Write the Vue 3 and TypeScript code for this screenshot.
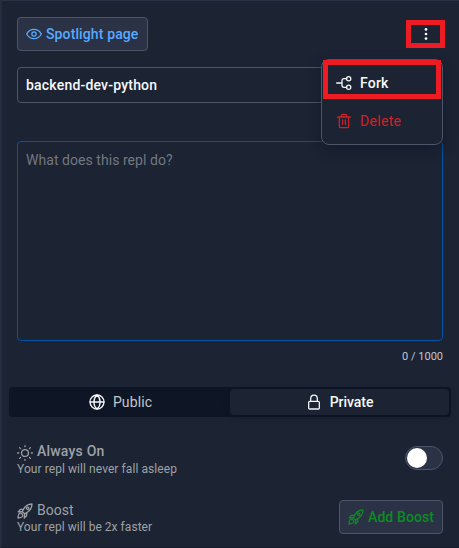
<script setup lang="ts">
import { ref } from 'vue'

const title = ref<string>('backend-dev-python')
const description = ref<string>('')
const limit = 1000
const visibility = ref<'public' | 'private'>('private')
const alwaysOn = ref<boolean>(false)
const rocket: string[] = [
  'M7 15.8 C5.8 14.8 4 15.2 3 16.4 C1.8 17.8 1.5 22.5 1.5 22.5 C1.5 22.5 6.2 22 7.6 20.8 C8.8 19.8 9 17.8 7.8 16.6',
  'M8 13 C10.5 6.5 14.5 1.5 22.5 1.5 C22.5 9.5 17.5 13.5 11.5 16.2 Z',
  'M9.5 9.5 H5 L1.8 13.2 L8 13 M14.5 14.8 V19 L10.8 22.5 L11.5 16.2',
]
</script>

<template>
  <main class="panel">
    <header class="top">
      <button class="button spotlight">
        <svg class="icon" viewBox="0 0 24 24"><path d="M1 12 C6 2.7 18 2.7 23 12 C18 21.3 6 21.3 1 12 Z" /><circle cx="12" cy="12" r="3.2" /></svg>
        <span>Spotlight page</span>
      </button>
      <div class="more-wrap">
        <button class="more" aria-label="More">
          <svg viewBox="0 0 16 16"><circle cx="8" cy="3.4" r="1.35" /><circle cx="8" cy="8" r="1.35" /><circle cx="8" cy="12.6" r="1.35" /></svg>
        </button>
        <div class="menu">
          <div class="item fork">
            <svg class="icon" viewBox="0 0 24 24"><path d="M1 12 H9 M16 5.5 H12 Q9 5.5 9 8.5 V15.5 Q9 18.5 12 18.5 H16" /><circle cx="19" cy="5.5" r="3.2" /><circle cx="19" cy="18.5" r="3.2" /></svg>
            <span>Fork</span>
          </div>
          <div class="item delete">
            <svg class="icon" viewBox="0 0 24 24"><path d="M2.5 6 H21.5 M5 6 V20 Q5 22 7 22 H17 Q19 22 19 20 V6 M8 6 V4 Q8 2 10 2 H14 Q16 2 16 4 V6 M10 10.5 V17 M14 10.5 V17" /></svg>
            <span>Delete</span>
          </div>
        </div>
      </div>
    </header>

    <input v-model="title" class="field name" />
    <textarea v-model="description" class="field description" placeholder="What does this repl do?"></textarea>
    <div class="count"><span>{{ description.length }} / {{ limit }}</span></div>

    <div class="segments">
      <button class="segment" :class="{ active: visibility === 'public' }" @click="visibility = 'public'">
        <svg class="icon" viewBox="0 0 24 24"><circle cx="12" cy="12" r="10.5" /><path d="M1.5 12 H22.5 M12 1.5 C5.7 7 5.7 17 12 22.5 C18.3 17 18.3 7 12 1.5" /></svg>
        <span class="public">Public</span>
      </button>
      <button class="segment" :class="{ active: visibility === 'private' }" @click="visibility = 'private'">
        <svg class="icon" viewBox="0 0 24 24"><rect x="4" y="11" width="16" height="11.5" rx="1.5" /><path d="M7 11 V7 C7 -0.3 17 -0.3 17 7 V11" /></svg>
        <span class="private">Private</span>
      </button>
    </div>

    <section class="row always">
      <div>
        <div class="heading strong">
          <svg class="icon" viewBox="0 0 24 24"><circle cx="12" cy="12" r="5.2" /><path d="M12 1 V2.5 M12 21.5 V23 M1 12 H2.5 M21.5 12 H23 M4 4 L5.2 5.2 M18.8 18.8 L20 20 M4 20 L5.2 18.8 M18.8 5.2 L20 4" /></svg>
          <span class="always-label">Always On</span>
        </div>
        <p><span class="sleep">Your repl will never fall asleep</span></p>
      </div>
      <button class="toggle" :class="{ on: alwaysOn }" aria-label="Always On" @click="alwaysOn = !alwaysOn"><i></i></button>
    </section>

    <section class="row boost">
      <div>
        <div class="heading">
          <svg class="icon" viewBox="0 0 24 24"><path v-for="d in rocket" :key="d" :d="d" /><circle cx="16" cy="8" r="1.8" /></svg>
          <span class="boost-label">Boost</span>
        </div>
        <p><span class="faster">Your repl will be 2x faster</span></p>
      </div>
      <button class="button add">
        <svg class="icon" viewBox="0 0 24 24"><path v-for="d in rocket" :key="d" :d="d" /><circle cx="16" cy="8" r="1.8" /></svg>
        <span>Add Boost</span>
      </button>
    </section>
  </main>
</template>

<style>
body { background: #1c2333; }
</style>

<style scoped>
* { box-sizing: border-box; }
.panel {
  height: 548px;
  padding: 16px 16px 0 15px;
  border-top: 1px solid #2b3245;
  border-left: 2px solid #252c40;
  border-bottom: 1px solid #151c2b;
  background: #1c2333;
  color: #f5f9fc;
  font: 14px/20px Roboto, "Liberation Sans", sans-serif;
  overflow: hidden;
}
button { margin: 0; padding: 0; font: inherit; color: inherit; background: none; border: 0; }
span { white-space: nowrap; }
.icon { width: 16px; height: 16px; flex: none; fill: none; stroke: currentColor; stroke-width: 1.9; stroke-linecap: round; stroke-linejoin: round; }
.top { display: flex; justify-content: space-between; height: 34px; }
.button { display: flex; align-items: center; gap: 4px; height: 34px; padding: 0 8px; background: #2b3245; border: 1px solid #4e5569; border-radius: 4px; font-weight: 500; }
.spotlight { width: 131px; color: #57abff; letter-spacing: .12px; }
.more-wrap { position: relative; }
.more { display: grid; place-items: center; width: 39px; height: 28px; margin: 3px -2px 0 0; border: 5px solid #ed1c24; }
.more svg { width: 16px; height: 16px; fill: #fff; }
.menu { position: absolute; z-index: 1; top: 42px; right: 0; width: 122px; height: 86px; background: #1c2333; border: 1px solid #4e5569; border-radius: 8px; box-shadow: 0 4px 12px #0e152599; }
.item { display: flex; align-items: center; gap: 8px; }
.fork { width: 118px; height: 39px; margin-left: 1px; padding: 6px 0 0 8px; border: 5px solid #ed1c24; font-weight: 500; letter-spacing: .2px; }
.delete { padding: 12px 0 0 14px; color: #d61f24; letter-spacing: .3px; }
.field { display: block; width: 426px; margin: 0; padding: 0 8px; border: 1px solid #4e5569; border-radius: 4px; outline: 0; background: #1c2333; color: #f5f9fc; font: 14px/20px Roboto, sans-serif; resize: none; }
.name { height: 36px; margin-top: 16px; font-weight: 500; letter-spacing: .2px; }
.description { height: 200px; margin-top: 38px; padding-top: 8px; border-color: #0053a6; letter-spacing: .05px; }
.description::placeholder { color: #737780; opacity: 1; }
.count { margin-top: 8px; height: 16px; text-align: right; font-size: 11px; line-height: 16px; color: #c2c8cc; }
.segments { display: flex; width: 442px; height: 30px; margin: 22px 0 0 -8px; padding: 2px; border-radius: 4px; background: #0e1525; }
.segment { display: flex; flex: 1; align-items: center; justify-content: center; gap: 8px; color: #c2c8cc; border-radius: 4px; }
.segment .icon { color: #f5f9fc; }
.segment.active { background: #1c2333; color: #f5f9fc; font-weight: 500; box-shadow: 0 3px 6px #0e152540; }
.public { letter-spacing: .1px; }
.private { letter-spacing: -.05px; }
.row { display: flex; justify-content: space-between; color: #9da2a6; }
.always { margin-top: 24px; }
.heading { display: flex; align-items: center; gap: 4px; height: 20px; }
.heading .icon { margin-top: 3px; }
.strong { font-weight: 500; }
.always-label { letter-spacing: .2px; }
.row p { margin: 0; font-size: 12px; line-height: 16px; }
.sleep { letter-spacing: .07px; }
.faster { letter-spacing: .04px; }
.toggle { width: 38px; height: 24px; margin-top: 5px; padding: 1px; border: 1px solid #4e5569; border-radius: 12px; background: #2b3245; }
.toggle i { display: block; width: 20px; height: 20px; border-radius: 50%; background: #fff; }
.toggle.on i { transform: translateX(14px); }
.boost { margin-top: 22px; }
.boost .heading { padding-top: 1px; }
.add { width: 104px; margin-top: 1px; color: #0b8c22; letter-spacing: .1px; }
</style>
